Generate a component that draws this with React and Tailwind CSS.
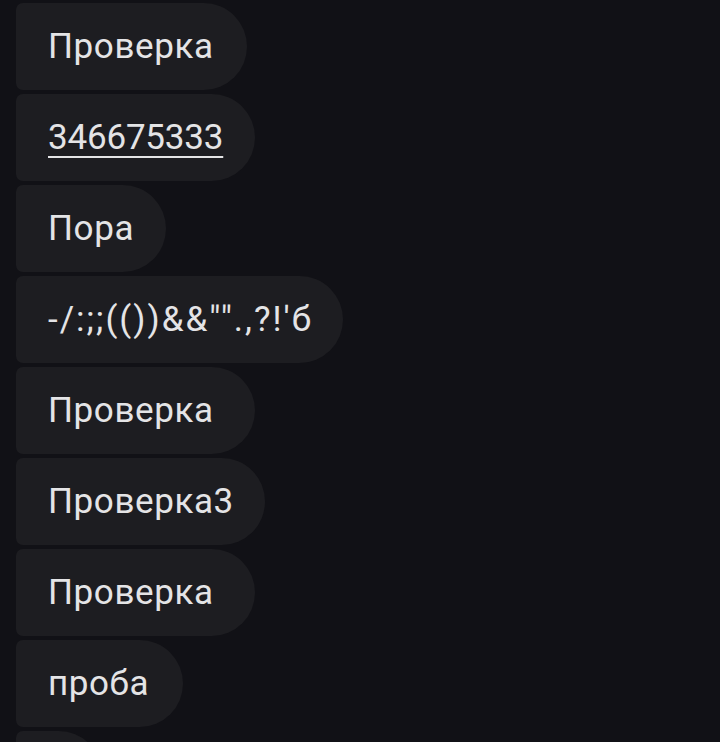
const messages = [
  { text: 'Проверка', width: 'w-[231px]' },
  { text: '346675333', width: 'w-[239px]', link: true },
  { text: 'Пора', width: 'w-[150px]' },
  { text: '-/:;;(())&&"".,?!\'б', width: 'w-[327px]', wide: true },
  { text: 'Проверка', width: 'w-[239px]' },
  { text: 'Проверка3', width: 'w-[249px]' },
  { text: 'Проверка', width: 'w-[239px]' },
  { text: 'проба', width: 'w-[167px]' },
  { text: '\u00a0', width: 'w-[86px]' },
];

function Bubble({ text, width, link, wide }) {
  const tracking = wide ? 'tracking-[2px]' : link ? 'tracking-[-0.2px]' : 'tracking-[0.6px]';
  return (
    <div
      className={`flex h-[87px] shrink-0 items-center rounded-l-[7px] rounded-r-[44px] bg-[#1d1d21] pl-8 ${width}`}
    >
      <span
        className={`whitespace-nowrap text-[35px] leading-none text-[#e4e4e6] ${tracking} ${
          link ? 'underline decoration-2 underline-offset-[7px]' : ''
        }`}
      >
        {text}
      </span>
    </div>
  );
}

export default function App() {
  return (
    <div className="h-[742px] w-[720px] overflow-hidden bg-[#111116] font-['Roboto',sans-serif]">
      <div className="flex flex-col items-start gap-1 pl-4 pt-[3px]">
        {messages.map((m, i) => (
          <Bubble key={i} text={m.text} width={m.width} link={m.link} wide={m.wide} />
        ))}
      </div>
    </div>
  );
}
